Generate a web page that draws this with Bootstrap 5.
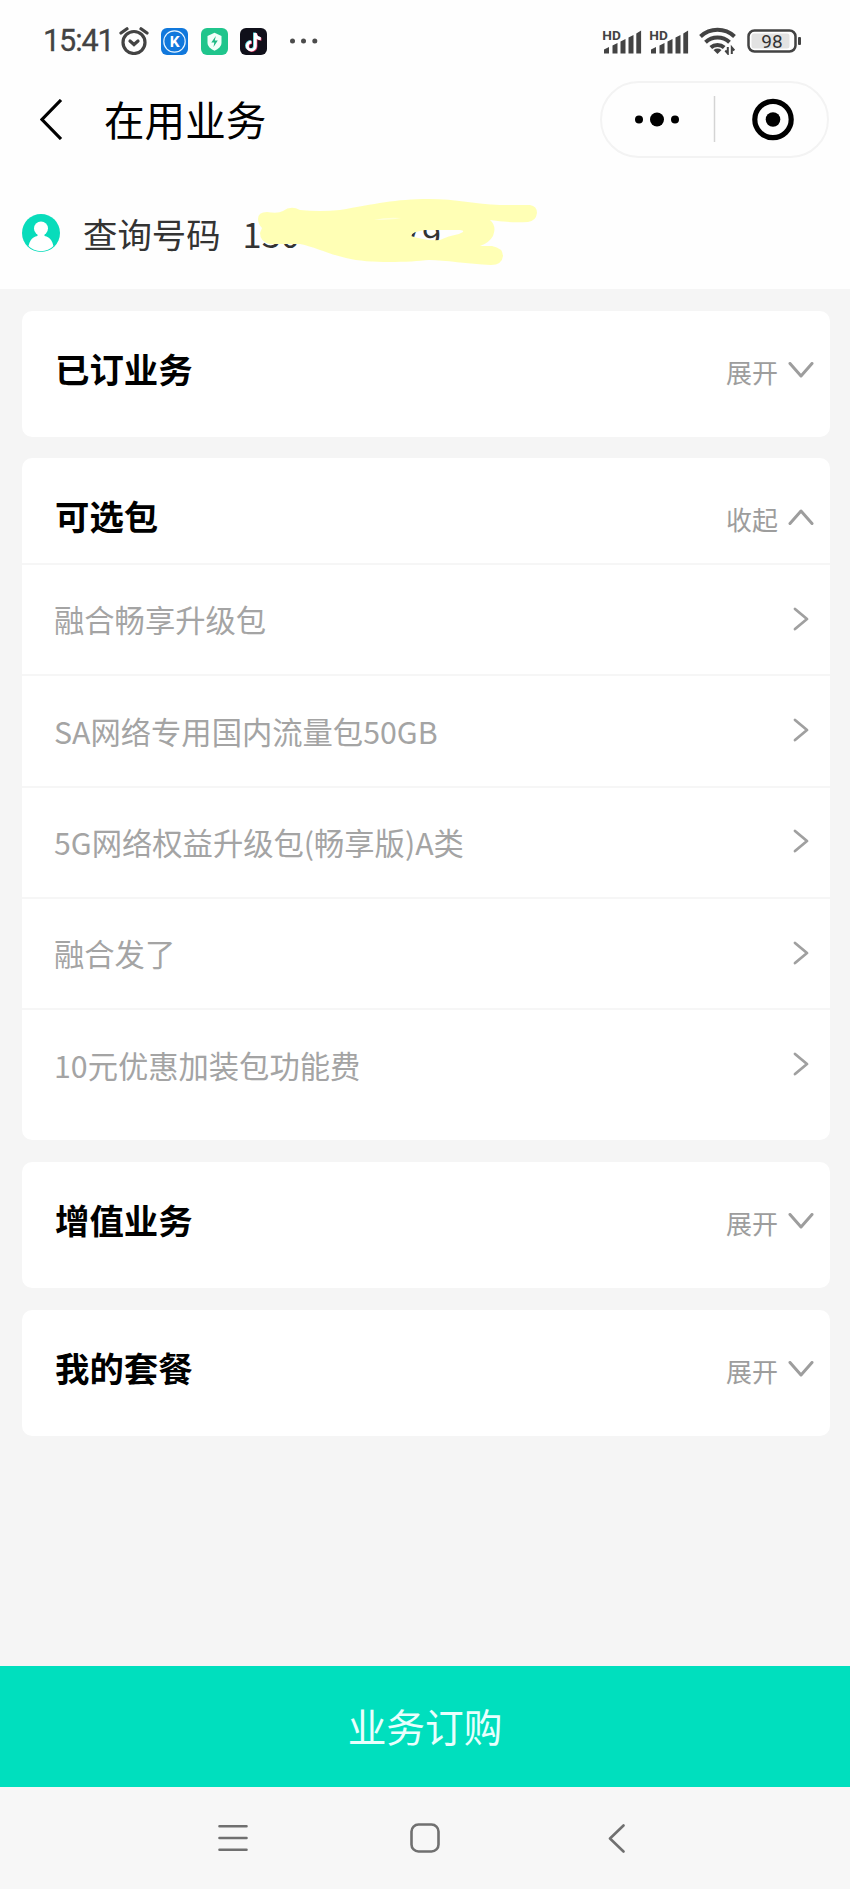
<!DOCTYPE html>
<html lang="zh-CN">
<head>
<meta charset="utf-8">
<meta name="viewport" content="width=device-width, initial-scale=1">
<title>在用业务</title>
<link href="https://cdn.jsdelivr.net/npm/bootstrap@5.3.0/dist/css/bootstrap.min.css" rel="stylesheet">
<style>
  body { font-family: "Noto Sans CJK SC", sans-serif; background: #f5f5f5; color: #000; height: 1889px; line-height: 1.2; overflow: hidden; }
  svg { display: block; flex: none; }
  .screen { height: 1889px; }
  .top-block { background: #fefefe; height: 289px; }
  .status-bar { height: 80px; padding: 2px 48px 0 43px; color: #434343; }
  .clock { font: 400 30.6px/1 Roboto, sans-serif; letter-spacing: -1.1px; width: 76px; white-space: nowrap; -webkit-text-stroke: .3px #434343; }
  .signal { overflow: visible; }
  .title-bar { height: 79px; padding: 0 21px 0 40px; }
  .page-title { font-size: 40.6px; font-weight: 400; margin: -1px 0 0 41px; line-height: 1.2; }
  .capsule { width: 229px; height: 77px; border: 2px solid #f3f3f3; border-radius: 39px; }
  .user-row { height: 130px; padding: 18px 0 0 22px; font-size: 34.4px; color: #333; }
  .user-label { margin: 1px 0 0 23px; }
  .num-head { margin: 1px 0 0 22px; }
  .num-tail { margin: 1px 0 0 103px; }
  .scribble { left: 250px; top: 35px; }
  .content { padding: 22px 20px 0 22px; }
  .panel { background: #fff; border-radius: 10px; margin-bottom: 22px; height: 126px; }
  .panel.open { height: 682px; margin-top: -1px; }
  .panel-head { height: 105px; padding: 12px 16px 0 33px; }
  .panel-name { font-size: 34.4px; font-weight: 700; margin: -1px 0 0; }
  .toggle { font-size: 26px; color: #9d9d9d; gap: 10px; }
  .toggle span { margin-top: 4px; }
  .item { height: 111.3px; border: 0; border-top: 2px solid #f6f6f6; padding: 0 21px 2px 32px; font-size: 30.3px; color: #a4a4a4; background: transparent; }
  .item span { margin-top: 2px; }
  .order { background: #00dfbe; color: #e9fffd; height: 121px; font-size: 38.7px; border: 0; border-radius: 0; padding: 0 0 2px; }
  .sys-nav { height: 102px; background: #f7f7f7; padding: 0 225px 0 217px; }
  .home-key { margin-left: -6px; }
</style>
</head>
<body>
<div class="screen d-flex flex-column">
  <header class="top-block">
    <div class="status-bar d-flex align-items-center">
      <span class="clock">15:41</span>
      <svg width="30" height="28" viewBox="0 0 30 28" fill="none" stroke="#434343" stroke-width="3.200" stroke-linecap="round"><circle cx="15" cy="15.500" r="11"/><path d="M2 6 8 1.800M28 6 22 1.800"/><path d="m11 14 4 3.500 4-3.500"/></svg>
      <svg width="27" height="27" viewBox="0 0 27 27" style="margin-left:12px"><rect width="27" height="27" rx="6" fill="#1178dc"/><circle cx="13.500" cy="13.500" r="10.700" fill="none" stroke="#e6f4ff" stroke-width="1.200"/><text x="13.700" y="19" font-family="Roboto" font-weight="700" font-size="15.500" fill="#fff" text-anchor="middle">K</text></svg>
      <svg width="27" height="27" viewBox="0 0 27 27" style="margin-left:13px"><rect width="27" height="27" rx="6" fill="#20c58c"/><path d="M13.500 4.800 20.500 8v6.500c0 4-3 6.300-7 8.200-4-1.900-7-4.200-7-8.200V8Z" fill="#f2fffa"/><path d="M14.800 8 10.300 14.500h3l-.8 4.500 4.300-6.500h-3Z" fill="#20b985"/></svg>
      <svg width="27" height="27" viewBox="0 0 27 27" style="margin-left:12px"><rect width="27" height="27" rx="6" fill="#10101a"/><g fill="none" stroke-width="2.900"><path d="M14.500 4.500v13a4 4 0 1 1-4-4M14.500 5c.5 3.500 2.500 5 5.500 5.200" stroke="#58dce5"/><path d="M16 5.500v13a4 4 0 1 1-4-4M16 6c.5 3.500 2.500 5 5.500 5.200" stroke="#e03a68"/><path d="M15.300 5v13a4 4 0 1 1-4-4M15.300 5.500c.5 3.500 2.500 5 5.500 5.200" stroke="#fff"/></g></svg>
      <svg width="29" height="6" viewBox="0 0 29 6" fill="#4c4c4c" style="margin-left:22px"><circle cx="3.500" cy="3" r="2.500"/><circle cx="14.500" cy="3" r="2.500"/><circle cx="25.800" cy="3" r="2.500"/></svg>
      <div class="ms-auto d-flex align-items-center">
        <svg class="signal" width="40" height="27" viewBox="0 0 40 27" fill="#434343"><text x=".3" y="11.500" font-family="Roboto" font-weight="700" font-size="12.500" textLength="18.500" lengthAdjust="spacingAndGlyphs">HD</text><path d="M2 25.500v-4l5-2.500v6.500ZM10.500 25.500v-8l5-2.500v10.500ZM18.500 25.500v-12l5-2.500v14.500ZM26.500 25.500v-16l5-2.500v18.500ZM34.300 25.500v-20l4.800-3v23Z"/></svg>
        <svg class="signal" width="40" height="27" viewBox="0 0 40 27" fill="#434343" style="margin-left:7px"><text x=".3" y="11.500" font-family="Roboto" font-weight="700" font-size="12.500" textLength="18.500" lengthAdjust="spacingAndGlyphs">HD</text><path d="M2 25.500v-4l5-2.500v6.500ZM10.500 25.500v-8l5-2.500v10.500ZM18.500 25.500v-12l5-2.500v14.500ZM26.500 25.500v-16l5-2.500v18.500ZM34.300 25.500v-20l4.800-3v23Z"/></svg>
        <svg width="37" height="28" viewBox="0 0 37 28" fill="none" stroke="#434343" stroke-width="4" style="margin-left:10px"><path d="M1.500 9.500a25 25 0 0 1 34 0M6.500 15.200a17.500 17.500 0 0 1 24 0M11.800 20.500a10 10 0 0 1 13.400 0"/><path d="m18.500 27-4-4q4-2.800 8 0Z" fill="#434343" stroke="none"/><path d="M28.800 20v6.500l-2.500-3M32.800 27v-6.500l2.500 3" stroke-width="2"/></svg>
        <svg width="55" height="24" viewBox="0 0 55 24" style="margin-left:11px"><rect x="1.500" y="1.500" width="47" height="21" rx="6" fill="#fff" stroke="#434343" stroke-width="2.500"/><rect x="4.500" y="4.500" width="38" height="15" rx="2.500" fill="#e2e2e2"/><rect x="51" y="8" width="3" height="8" rx="1" fill="#434343"/><text x="25" y="18.700" font-family="Roboto" font-size="19" text-anchor="middle" fill="#333">98</text></svg>
      </div>
    </div>
    <div class="title-bar d-flex align-items-center">
      <svg width="23" height="41" viewBox="0 0 23 41" fill="none" stroke="#000" stroke-width="3.200"><path d="M21 1 2 20.500 21 40"/></svg>
      <h1 class="page-title">在用业务</h1>
      <div class="capsule ms-auto d-flex align-items-center">
        <svg width="225" height="73" viewBox="0 0 225 73"><circle cx="37" cy="36.500" r="4"/><circle cx="55" cy="36.500" r="7"/><circle cx="73" cy="36.500" r="4"/><path d="M112.500 13v46" stroke="#d4d4d4" stroke-width="1.500"/><circle cx="171" cy="36.500" r="18.200" fill="none" stroke="#000" stroke-width="5.200"/><circle cx="171" cy="36.500" r="7.300"/></svg>
      </div>
    </div>
    <div class="user-row d-flex align-items-center position-relative">
      <svg width="38" height="38" viewBox="0 0 38 38"><defs><clipPath id="face"><circle cx="19" cy="19" r="18.200"/></clipPath></defs><circle cx="19" cy="19" r="19" fill="#08dcbb"/><g fill="#fff" clip-path="url(#face)"><circle cx="19" cy="14.500" r="7"/><path d="M15.500 18h7v4c6 .8 9.500 6.500 9.800 17H5.700c.3-10.500 3.800-16.200 9.800-17Z"/></g></svg>
      <span class="user-label">查询号码</span>
      <span class="num-head">130</span>
      <span class="num-tail">79</span>
      <svg class="scribble position-absolute" width="295" height="75" viewBox="250 194 295 75"><path fill="#ffffb5" fill-rule="evenodd" d="M258 219Q258 212 267 212 278 214 283 211 291 205 300 210 320 212 340 210C375 204 395 199 429 199 457 199 475 204 500 205L530 205Q537 206 537 213 536 221 528 222 507 223 490 220 497 226 493 236 489 243 480 246L492 246Q503 248 503 256 502 265 491 265C468 264 445 260 429 260 410 262 370 264 346 258 328 254 315 247 300 244L270 244Q260 242 260 233L262 228Q258 224 258 219ZM411 236Q411 232 425 230L460 230Q467 231 459 234 448 236 440 240 425 241 411 236Z"/><path d="M374 220q12-3 27-2-10 2-27 2Z" fill="#ffffd8"/></svg>
    </div>
  </header>

  <main class="content flex-grow-1">
    <section class="panel">
      <div class="panel-head d-flex align-items-center justify-content-between">
        <h2 class="panel-name">已订业务</h2>
        <div class="toggle d-flex align-items-center"><span>展开</span><svg width="26" height="16" viewBox="0 0 26 16" fill="none" stroke="#9d9d9d" stroke-width="3" stroke-linecap="round" stroke-linejoin="round"><path d="M2 1.500 13 14 24 1.500"/></svg></div>
      </div>
    </section>
    <section class="panel open">
      <div class="panel-head d-flex align-items-center justify-content-between">
        <h2 class="panel-name">可选包</h2>
        <div class="toggle d-flex align-items-center"><span>收起</span><svg width="26" height="16" viewBox="0 0 26 16" fill="none" stroke="#9d9d9d" stroke-width="3" stroke-linecap="round" stroke-linejoin="round"><path d="M2 14.500 13 2 24 14.500"/></svg></div>
      </div>
      <div class="list-group list-group-flush">
        <div class="item d-flex align-items-center justify-content-between"><span>融合畅享升级包</span><svg width="16" height="24" viewBox="0 0 16 24" fill="none" stroke="#a0a0a0" stroke-width="2.800" stroke-linecap="round" stroke-linejoin="round"><path d="M2 2 14 12 2 22"/></svg></div>
        <div class="item d-flex align-items-center justify-content-between"><span>SA网络专用国内流量包50GB</span><svg width="16" height="24" viewBox="0 0 16 24" fill="none" stroke="#a0a0a0" stroke-width="2.800" stroke-linecap="round" stroke-linejoin="round"><path d="M2 2 14 12 2 22"/></svg></div>
        <div class="item d-flex align-items-center justify-content-between"><span>5G网络权益升级包(畅享版)A类</span><svg width="16" height="24" viewBox="0 0 16 24" fill="none" stroke="#a0a0a0" stroke-width="2.800" stroke-linecap="round" stroke-linejoin="round"><path d="M2 2 14 12 2 22"/></svg></div>
        <div class="item d-flex align-items-center justify-content-between"><span>融合发了</span><svg width="16" height="24" viewBox="0 0 16 24" fill="none" stroke="#a0a0a0" stroke-width="2.800" stroke-linecap="round" stroke-linejoin="round"><path d="M2 2 14 12 2 22"/></svg></div>
        <div class="item d-flex align-items-center justify-content-between"><span>10元优惠加装包功能费</span><svg width="16" height="24" viewBox="0 0 16 24" fill="none" stroke="#a0a0a0" stroke-width="2.800" stroke-linecap="round" stroke-linejoin="round"><path d="M2 2 14 12 2 22"/></svg></div>
      </div>
    </section>
    <section class="panel">
      <div class="panel-head d-flex align-items-center justify-content-between">
        <h2 class="panel-name">增值业务</h2>
        <div class="toggle d-flex align-items-center"><span>展开</span><svg width="26" height="16" viewBox="0 0 26 16" fill="none" stroke="#9d9d9d" stroke-width="3" stroke-linecap="round" stroke-linejoin="round"><path d="M2 1.500 13 14 24 1.500"/></svg></div>
      </div>
    </section>
    <section class="panel">
      <div class="panel-head d-flex align-items-center justify-content-between">
        <h2 class="panel-name">我的套餐</h2>
        <div class="toggle d-flex align-items-center"><span>展开</span><svg width="26" height="16" viewBox="0 0 26 16" fill="none" stroke="#9d9d9d" stroke-width="3" stroke-linecap="round" stroke-linejoin="round"><path d="M2 1.500 13 14 24 1.500"/></svg></div>
      </div>
    </section>
  </main>

  <button class="order w-100 flex-shrink-0" type="button">业务订购</button>
  <nav class="sys-nav d-flex align-items-center justify-content-between flex-shrink-0">
    <svg width="31" height="28" viewBox="0 0 31 28" stroke="#707070" stroke-width="2.600" stroke-linecap="round"><path d="M2.500 2.300h27M2.500 14h27M2.500 25.700h27"/></svg>
    <svg class="home-key" width="30" height="30" viewBox="0 0 30 30" fill="none" stroke="#707070" stroke-width="2.600"><rect x="1.500" y="1.500" width="27" height="27" rx="7"/></svg>
    <svg width="17" height="29" viewBox="0 0 17 29" fill="none" stroke="#707070" stroke-width="2.600" stroke-linecap="round" stroke-linejoin="round"><path d="M15.500 1.500 2 14.500 15.500 27.500"/></svg>
  </nav>
</div>
<script src="https://cdn.jsdelivr.net/npm/bootstrap@5.3.0/dist/js/bootstrap.bundle.min.js"></script>
</body>
</html>
